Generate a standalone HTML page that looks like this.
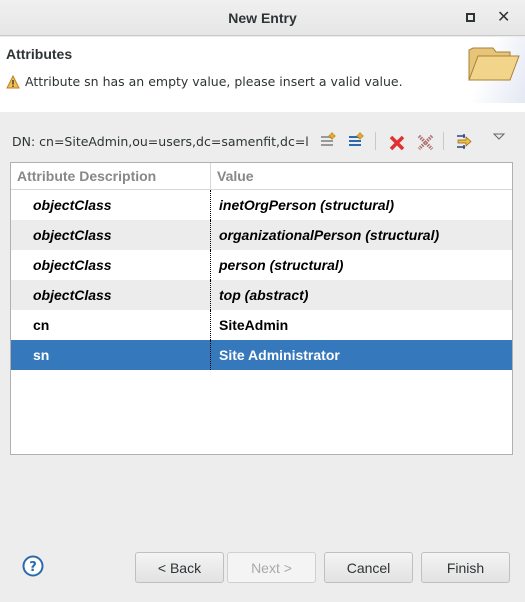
<!DOCTYPE html>
<html><head><meta charset="utf-8"><style>
*{margin:0;padding:0;box-sizing:border-box}
body{width:525px;height:602px;background:#ededed;font-family:"DejaVu Sans","Liberation Sans",sans-serif;font-size:13px;color:#2e3436;position:relative;overflow:hidden}
.abs{position:absolute}
.L{font-family:"Liberation Sans",sans-serif}
.title{left:0;top:0;width:525px;height:36px;background:linear-gradient(#f0f0f0,#e6e6e6);border-bottom:1px solid #c8c8c8;text-align:center;line-height:36px;font-weight:bold;font-size:14px;color:#2e3436}
.hdr{left:0;top:37px;width:525px;height:75px;background:#fff}
.tbl{left:10px;top:162px;width:503px;height:293px;background:#fff;border:1px solid #b0b0b0}
.row{position:absolute;left:0;width:501px;height:30px;line-height:30px;font-weight:bold;font-size:14px;color:#000;font-family:"Liberation Sans",sans-serif}
.row span{position:absolute;white-space:nowrap}
.c1{left:22px}.c2{left:208px}
.btn{position:absolute;top:552px;width:89px;height:31px;border:1px solid #c0c0c0;border-radius:3px;background:linear-gradient(#f4f4f4,#e2e2e2);text-align:center;line-height:30px;font-size:14px;color:#2e3436;font-family:"Liberation Sans",sans-serif}
.div{position:absolute;left:199px;top:0;height:100%;border-left:1px dotted #000}
</style></head><body>
<div class="abs title L">New Entry</div>
<div class="abs" style="left:466px;top:13px;width:9px;height:9px;border:2px solid #2e3436"></div>
<div class="abs" style="left:497px;top:7px;font-size:16px;font-weight:bold;color:#2e3436">✕</div>
<div class="abs hdr"></div>
<div class="abs" style="left:455px;top:37px;width:70px;height:66px;background:linear-gradient(110deg,#fff 40%,#e4e8f4)"></div>
<svg class="abs" style="left:464px;top:40px" width="58" height="45" viewBox="0 0 58 45">
<path d="M5 10 L5 40 L46 40 L46 12 L32 12 L29 8 L9 8 Z" fill="#e6c47a" stroke="#a88234"/>
<path d="M5 40 L14 16 L55 16 L46 40 Z" fill="#f2d48a" stroke="#a88234"/>
</svg>
<div class="abs L" style="left:6px;top:46px;font-weight:bold;font-size:14px">Attributes</div>
<svg class="abs" style="left:6px;top:75px" width="14" height="14"><path d="M7 1 L13 13 L1 13 Z" fill="#f0c050" stroke="#c08020"/><rect x="6.3" y="5" width="1.4" height="4.5" fill="#333"/><rect x="6.3" y="10.5" width="1.4" height="1.4" fill="#333"/></svg>
<div class="abs" style="left:25px;top:74px;font-size:12.5px;white-space:nowrap">Attribute sn has an empty value, please insert a valid value.</div>
<div class="abs" style="left:12px;top:134px;font-size:12.5px;width:298px;overflow:hidden;white-space:nowrap">DN: cn=SiteAdmin,ou=users,dc=samenfit,dc=l</div>
<svg class="abs" style="left:318px;top:130px" width="200" height="22">
<g><rect x="3" y="6" width="12" height="2" fill="#999"/><rect x="3" y="10" width="12" height="2" fill="#999"/><rect x="3" y="14" width="12" height="2" fill="#999"/><path d="M13 3h2v2h2v2h-2v2h-2v-2h-2v-2h2z" fill="#f0b020" stroke="#a07010" stroke-width=".5"/></g>
<g transform="translate(28,0)"><rect x="3" y="6" width="12" height="2" fill="#2a6ab0"/><rect x="3" y="10" width="12" height="2" fill="#2a6ab0"/><rect x="3" y="14" width="12" height="2" fill="#2a6ab0"/><path d="M13 3h2v2h2v2h-2v2h-2v-2h-2v-2h2z" fill="#f0b020" stroke="#a07010" stroke-width=".5"/></g>
<rect x="57" y="2" width="1" height="18" fill="#c8c8c8"/>
<path d="M73 7 L85 19 M85 7 L73 19" stroke="#e03030" stroke-width="3.5"/>
<path d="M101 6 L114 19 M114 6 L101 19" stroke="#b07070" stroke-width="3.5" stroke-dasharray="1.5 1"/>
<rect x="125" y="2" width="1" height="18" fill="#c8c8c8"/>
<path d="M139 6h8M139 17h8M146 4v4M146 15v4" stroke="#2a4a80" stroke-width="1.5"/><path d="M140 10h8v-3l5 4.5-5 4.5v-3h-8z" fill="#f0c040" stroke="#906010" stroke-width=".7"/>
<path d="M176 4 L186 4 L181 9 Z" fill="none" stroke="#666"/>
</svg>
<div class="abs tbl">
<div class="row" style="top:0;height:27px;line-height:27px;color:#888;border-bottom:1px solid #d8d8d8"><span style="left:6px">Attribute Description</span><span style="left:199px;border-left:1px solid #d8d8d8;padding-left:6px;height:27px">Value</span></div>
<div class="row" style="top:27px;background:#fff"><span class="c1"><i>objectClass</i></span><span class="c2"><i>inetOrgPerson (structural)</i></span><div class="div"></div></div>
<div class="row" style="top:57px;background:#ececec"><span class="c1"><i>objectClass</i></span><span class="c2"><i>organizationalPerson (structural)</i></span><div class="div"></div></div>
<div class="row" style="top:87px;background:#fff"><span class="c1"><i>objectClass</i></span><span class="c2"><i>person (structural)</i></span><div class="div"></div></div>
<div class="row" style="top:117px;background:#ececec"><span class="c1"><i>objectClass</i></span><span class="c2"><i>top (abstract)</i></span><div class="div"></div></div>
<div class="row" style="top:147px;background:#fff"><span class="c1">cn</span><span class="c2">SiteAdmin</span><div class="div"></div></div>
<div class="row" style="top:177px;background:#3678bc;color:#fff"><span class="c1">sn</span><span class="c2">Site Administrator</span><div class="div"></div></div>
</div>
<svg class="abs" style="left:22px;top:555px" width="22" height="22"><circle cx="11" cy="11" r="9.5" fill="#fff" stroke="#2a6ab0" stroke-width="2"/><text x="11" y="16" text-anchor="middle" font-family="DejaVu Sans" font-weight="bold" font-size="13" fill="#2a6ab0">?</text></svg>
<div class="btn" style="left:135px">&lt; Back</div>
<div class="btn" style="left:227px;color:#aaa;background:#f4f4f4;border-color:#d0d0d0">Next &gt;</div>
<div class="btn" style="left:324px">Cancel</div>
<div class="btn" style="left:421px">Finish</div>
</body></html>
